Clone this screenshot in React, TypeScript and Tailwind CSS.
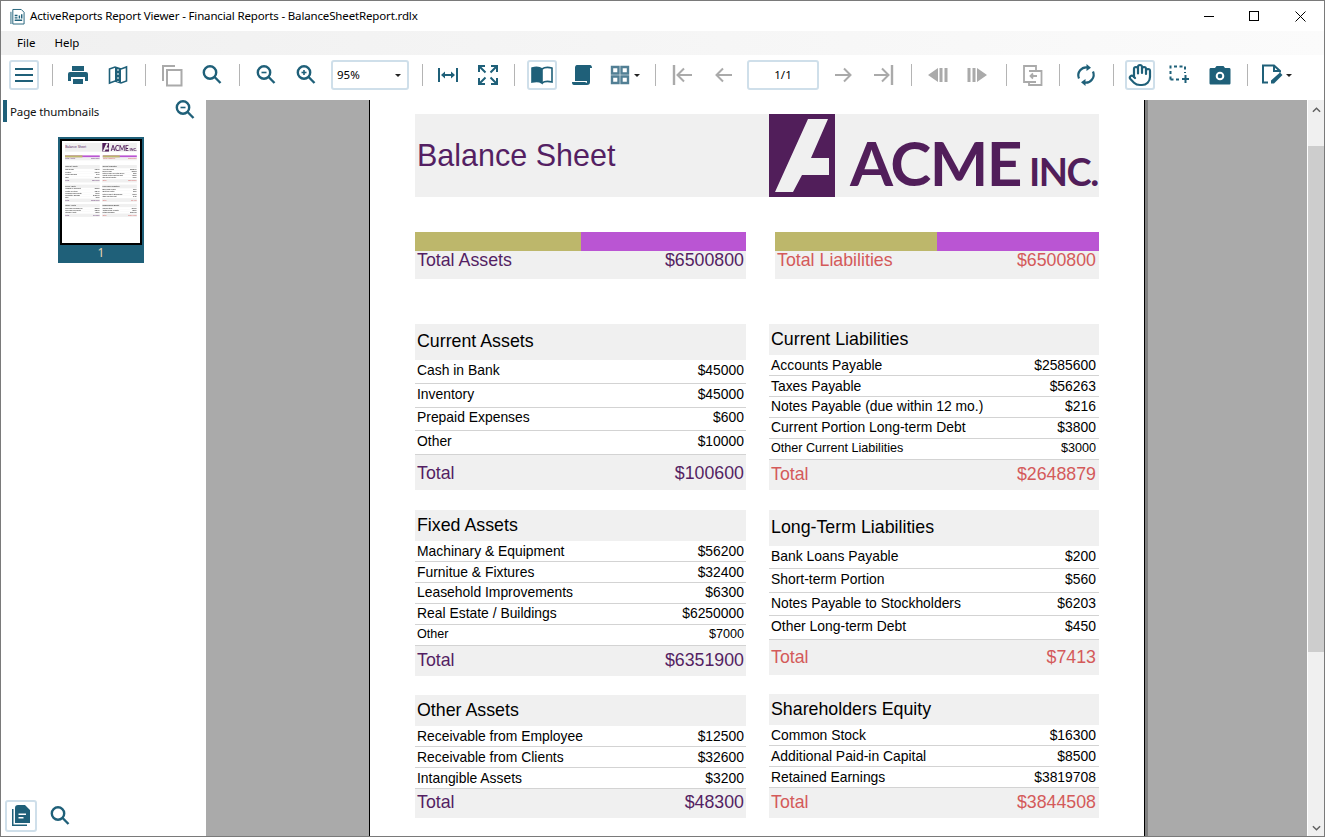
import type { ReactNode } from "react";
import { Hand } from "lucide-react";

const ui = "font-['Noto_Sans','Open_Sans',sans-serif]";

type Row = [string, string, boolean?];

function Section({ title, head, rowH, total, rows, tone, mb, pr }: { title: string; head: string; rowH: string; total: [string, string]; rows: Row[]; tone: string; mb: string; pr: string }) {
  return (
    <div className={mb}>
      <div className={`${head} bg-[#f0f0f0] px-[2px] flex items-center text-[17.8px] text-black`}>{title}</div>
      {rows.map(([label, value, small]) => (
        <div key={label} className={`${rowH} border-b border-[#d3d3d3] pl-[2px] ${pr} flex items-center justify-between text-black ${small ? "text-[12.6px]" : "text-[13.9px]"}`}>
          <span>{label}</span>
          <span>{value}</span>
        </div>
      ))}
      <div className={`${total[0]} bg-[#f0f0f0] pl-[2px] ${pr} flex items-center justify-between text-[17.8px] ${tone}`}>
        <span>Total</span>
        <span>{total[1]}</span>
      </div>
    </div>
  );
}

function Summary({ label, value, tone, width, olive, pr }: { label: string; value: string; tone: string; width: string; olive: string; pr: string }) {
  return (
    <div className={width}>
      <div className="flex h-[19px] bg-[#ba55d3]">
        <div className={`${olive} bg-[#bdb76b]`} />
      </div>
      <div className={`h-[28px] bg-[#f0f0f0] pl-[2px] ${pr} flex justify-between text-[17.8px] leading-[18px] ${tone}`}>
        <span>{label}</span>
        <span>{value}</span>
      </div>
    </div>
  );
}

function Report() {
  const purple = "text-[#541f63]";
  const red = "text-[#d45a5a]";
  return (
    <div className="w-[684px] font-['Liberation_Sans',Arial,sans-serif]">
      <div className="h-[83px] bg-[#f0f0f0] flex items-center">
        <div className={`w-[354px] shrink-0 pl-[2px] text-[30.5px] ${purple}`}>Balance Sheet</div>
        <svg viewBox="0 0 66 83" className="w-[66px] h-[83px] shrink-0">
          <path fill="#511e5a" fillRule="evenodd" d="M0 0H66V83H0ZM39 5 6 78H24L33 61H60V44H42L59 5Z" />
        </svg>
        <div className="ml-[15px] self-end pb-[7px] flex items-baseline font-['Lato',sans-serif] font-bold text-[#511e5a] whitespace-nowrap">
          <span className="text-[62px] leading-[48px] tracking-[-1.5px]">ACME</span>
          <span className="ml-[8px] text-[38px] leading-[38px] tracking-[-1.5px]">INC.</span>
        </div>
      </div>
      <div className="mt-[35px] flex justify-between">
        <Summary label="Total Assets" value="$6500800" tone={purple} width="w-[331px]" olive="w-[166px]" pr="pr-[2px]" />
        <Summary label="Total Liabilities" value="$6500800" tone={red} width="w-[324px]" olive="w-[162px]" pr="pr-[3px]" />
      </div>
      <div className="mt-[45px] flex justify-between">
        <div className="w-[331px]">
          <Section title="Current Assets" head="h-[36px] pb-[1px]" rowH="h-[23.75px] pb-[2px]" tone={purple} mb="mb-[20px]" pr="pr-[2px]" total={["h-[35px] pt-[1px]", "$100600"]}
            rows={[["Cash in Bank", "$45000"], ["Inventory", "$45000"], ["Prepaid Expenses", "$600"], ["Other", "$10000"]]} />
          <Section title="Fixed Assets" head="h-[31px]" rowH="h-[20.96px]" tone={purple} mb="mb-[19px]" pr="pr-[2px]" total={["h-[30.2px] pb-[0.5px]", "$6351900"]}
            rows={[["Machinary & Equipment", "$56200"], ["Furnitue & Fixtures", "$32400"], ["Leasehold Improvements", "$6300"], ["Real Estate / Buildings", "$6250000"], ["Other", "$7000", true]]} />
          <Section title="Other Assets" head="h-[31px]" rowH="h-[21px]" tone={purple} mb="mb-[19px]" pr="pr-[2px]" total={["h-[29px] pb-[2px]", "$48300"]}
            rows={[["Receivable from Employee", "$12500"], ["Receivable from Clients", "$32600"], ["Intangible Assets", "$3200"]]} />
        </div>
        <div className="w-[330px]">
          <Section title="Current Liabilities" head="h-[31px]" rowH="h-[20.96px]" tone={red} mb="mb-[20px]" pr="pr-[3px]" total={["h-[30.2px] pb-[0.5px]", "$2648879"]}
            rows={[["Accounts Payable", "$2585600"], ["Taxes Payable", "$56263"], ["Notes Payable (due within 12 mo.)", "$216"], ["Current Portion Long-term Debt", "$3800"], ["Other Current Liabilities", "$3000", true]]} />
          <Section title="Long-Term Liabilities" head="h-[36px] pb-[1px]" rowH="h-[23.5px] pb-[2px]" tone={red} mb="mb-[19px]" pr="pr-[3px]" total={["h-[35px]", "$7413"]}
            rows={[["Bank Loans Payable", "$200"], ["Short-term Portion", "$560"], ["Notes Payable to Stockholders", "$6203"], ["Other Long-term Debt", "$450"]]} />
          <Section title="Shareholders Equity" head="h-[31px]" rowH="h-[21px]" tone={red} mb="mb-[19px]" pr="pr-[3px]" total={["h-[30px] pb-[1px]", "$3844508"]}
            rows={[["Common Stock", "$16300"], ["Additional Paid-in Capital", "$8500"], ["Retained Earnings", "$3819708"]]} />
        </div>
      </div>
    </div>
  );
}

const teal = "#1f6079";
const off = "#aaaaaa";

function Ico({ children, color = teal, fill = "none", sw = 2 }: { children: ReactNode; color?: string; fill?: string; sw?: number }) {
  return (
    <svg viewBox="0 0 24 24" width="24" height="24" fill={fill} stroke={color} strokeWidth={sw}>
      {children}
    </svg>
  );
}

function Tool({ children, ml, active }: { children: ReactNode; ml: string; active?: boolean }) {
  return (
    <div className={`${ml} w-[30px] h-[30px] shrink-0 flex items-center justify-center rounded-[3px] ${active ? "border-2 border-[#cfdfea]" : ""}`}>
      {children}
    </div>
  );
}

function Sep({ ml }: { ml: string }) {
  return <div className={`${ml} w-px h-[22px] shrink-0 bg-[#b4b4b4]`} />;
}

function Caret() {
  return <div className="w-0 h-0 border-x-[3px] border-x-transparent border-t-[3px] border-t-[#222]" />;
}

const SearchIco = ({ sign }: { sign?: "plus" | "minus" }) => (
  <Ico sw={2.4}>
    <circle cx="10" cy="9.5" r="6.2" />
    <path d="M14.6 14 20.5 20" />
    {sign && <path strokeWidth={1.6} d="M7.5 9.5H12.5" />}
    {sign === "plus" && <path strokeWidth={1.6} d="M10 7V12" />}
  </Ico>
);

function Toolbar() {
  return (
    <div className="h-[45px] flex items-center pl-[8px] pb-[5px] bg-white shrink-0">
      <Tool ml="ml-0" active>
        <Ico sw={2.2}><path d="M3 6H21M3 12H21M3 18H21" /></Ico>
      </Tool>
      <Sep ml="ml-[13px]" />
      <Tool ml="ml-[10px]">
        <Ico color="none" fill={teal}>
          <path d="M6 3H18V8H6ZM4 9H20A2 2 0 0 1 22 11V18H19V14H5V18H2V11A2 2 0 0 1 4 9ZM7 16H17V21H7Z" />
        </Ico>
      </Tool>
      <Tool ml="ml-[10px]">
        <Ico sw={1.6}>
          <path d="M3.5 6 9 4 15 6 20.5 4V18L15 20 9 18 3.5 20Z" />
          <path fill={teal} stroke="none" d="M9 4 15 6V20L9 18Z" />
          <path stroke="#fff" strokeWidth={1} strokeDasharray="2 2" d="M12 6V19" />
        </Ico>
      </Tool>
      <Sep ml="ml-[12px]" />
      <Tool ml="ml-[11px]">
        <Ico color={off} sw={2}>
          <path d="M7 7H21.5V22.5H7Z" />
          <path d="M3 18V3H15" />
        </Ico>
      </Tool>
      <Tool ml="ml-[10px]"><SearchIco /></Tool>
      <Sep ml="ml-[12px]" />
      <Tool ml="ml-[11px]"><SearchIco sign="minus" /></Tool>
      <Tool ml="ml-[10px]"><SearchIco sign="plus" /></Tool>
      <div className="ml-[10px] w-[78px] h-[30px] shrink-0 border-2 border-[#cfdfea] rounded-[3px] flex items-center justify-between pl-[4px] pr-[6px] text-[11.5px] text-black">
        <span>95%</span>
        <Caret />
      </div>
      <Sep ml="ml-[13px]" />
      <Tool ml="ml-[10px]">
        <Ico><path d="M3 5V19M21 5V19M6.5 12H17.5" /><path fill={teal} stroke="none" d="M5 12 9 8.5V15.5ZM19 12 15 8.5V15.5Z" /></Ico>
      </Tool>
      <Tool ml="ml-[10px]">
        <Ico sw={2}>
          <path d="M3 9V3H9M21 9V3H15M3 15V21H9M21 15V21H15" />
          <path d="M4 4 9.5 9.5M20 4 14.5 9.5M4 20 9.5 14.5M20 20 14.5 14.5" />
        </Ico>
      </Tool>
      <Sep ml="ml-[11px]" />
      <Tool ml="ml-[12px]" active>
        <Ico sw={1.6}>
          <path fill={teal} d="M12 6C10 4.5 6 4 2 5V19C6 18 10 18.5 12 20Z" />
          <path d="M12 6C14 4.5 18 4 22 5V19C18 18 14 18.5 12 20" />
        </Ico>
      </Tool>
      <Tool ml="ml-[10px]">
        <Ico color="none" fill={teal}>
          <path d="M7 2H20C21.5 2 22 3.5 22 5L20 5V19C20 21 19 22 17 22H4C2.5 22 2 21 2 19H15C15.5 19 16 19.5 16 20C17 20 17 19 17 18H5V5C5 3.5 5.5 2 7 2Z" />
        </Ico>
      </Tool>
      <Tool ml="ml-[8px]">
        <Ico color="#527f94" sw={2.4}>
          <path d="M4 4H10.5V10.5H4ZM13.5 4H20V10.5H13.5ZM4 13.5H10.5V20H4ZM13.5 13.5H20V20H13.5Z" />
        </Ico>
      </Tool>
      <div className="ml-[-1px] mr-[-5px]"><Caret /></div>
      <Sep ml="ml-[20px]" />
      <Tool ml="ml-[11px]">
        <Ico color={off}><path strokeWidth={2.4} d="M4 2V22" /><path d="M22 12H8M14 5.5 7.5 12 14 18.5" /></Ico>
      </Tool>
      <Tool ml="ml-[11px]">
        <Ico color={off}><path d="M21 12H5M12 5.5 5.5 12 12 18.5" /></Ico>
      </Tool>
      <div className="ml-[9px] w-[72px] h-[30px] shrink-0 border-2 border-[#cfdfea] rounded-[3px] flex items-center justify-center text-[11.5px] text-black">1/1</div>
      <Tool ml="ml-[10px]">
        <Ico color={off}><path d="M3 12H19M12 5.5 18.5 12 12 18.5" /></Ico>
      </Tool>
      <Tool ml="ml-[10px]">
        <Ico color={off}><path strokeWidth={2.4} d="M20 2V22" /><path d="M2 12H16M10 5.5 16.5 12 10 18.5" /></Ico>
      </Tool>
      <Sep ml="ml-[12px]" />
      <Tool ml="ml-[11px]">
        <Ico color="none" fill={off}><path d="M2 12 12 5V19ZM13.5 5H16.5V19H13.5ZM18.5 5H21.5V19H18.5Z" /></Ico>
      </Tool>
      <Tool ml="ml-[9px]">
        <Ico color="none" fill={off}><path d="M22 12 12 5V19ZM10.5 5H7.5V19H10.5ZM5.5 5H2.5V19H5.5Z" /></Ico>
      </Tool>
      <Sep ml="ml-[14px]" />
      <Tool ml="ml-[11px]">
        <Ico color={off} sw={1.8}>
          <path d="M15 19H3V3H15V8" />
          <path d="M8 8H20.5V22H8V19" />
          <path d="M16 13H9.5M12 10.5 9.5 13 12 15.5" />
        </Ico>
      </Tool>
      <Sep ml="ml-[11px]" />
      <Tool ml="ml-[11px]">
        <Ico sw={2.2}>
          <path d="M5 15.5A8 8 0 0 1 14 4.5" />
          <path d="M19 8.5A8 8 0 0 1 10 19.5" />
          <path fill={teal} stroke="none" d="M12.5 1 17 4.8 12.5 8ZM11.5 16 7 19.2 11.5 23Z" />
        </Ico>
      </Tool>
      <Sep ml="ml-[12px]" />
      <Tool ml="ml-[11px]" active><Hand size={24} color={teal} strokeWidth={2.2} /></Tool>
      <Tool ml="ml-[9px]">
        <Ico sw={2}>
          <path strokeDasharray="3 2.5" d="M3.5 16.5V3.5H18V10" />
          <path strokeDasharray="3 2.5" d="M3.5 16.5H13" />
          <path d="M18.5 12V20M15 16H22" />
        </Ico>
      </Tool>
      <Tool ml="ml-[11px]">
        <svg viewBox="0 0 24 24" width="24" height="24">
          <path fill={teal} d="M3 5H7L8.5 3H15.5L17 5H21C22 5 22.5 5.5 22.5 6.5V20C22.5 21 22 21.5 21 21.5H3C2 21.5 1.5 21 1.5 20V6.5C1.5 5.5 2 5 3 5Z" />
          <circle cx="12" cy="13" r="3.3" fill="none" stroke="#fff" strokeWidth={2} />
        </svg>
      </Tool>
      <Sep ml="ml-[12px]" />
      <Tool ml="ml-[9px]">
        <Ico sw={2}>
          <path d="M8 19.5H3V2.5H14L20 8V9.5" />
          <path d="M14 2.5V8H20" />
          <path fill={teal} stroke="none" d="M20 9.5 22.5 12 14 20.5H11V17.5Z" />
        </Ico>
      </Tool>
      <div className="ml-[-1px]"><Caret /></div>
    </div>
  );
}

function Sidebar() {
  return (
    <div className="w-[205px] shrink-0 flex flex-col justify-between bg-white">
      <div>
        <div className="h-[22px] flex items-center justify-between pl-[2px] pr-[9px]">
          <div className="flex items-center h-full">
            <div className="w-[4px] h-full bg-[#1f6079]" />
            <span className="ml-[3px] mt-[2px] text-[11.5px] tracking-[-0.13px] text-[#111]">Page thumbnails</span>
          </div>
          <div className="mb-[2px]"><SearchIco sign="minus" /></div>
        </div>
        <div className="ml-[57px] mt-[15px] w-[86px] h-[126px] bg-[#1f6079]">
          <div className="mx-[2px] mt-[2px] pt-[2px] w-[82px] h-[106px] relative top-[2px] border-2 border-black bg-white overflow-hidden pl-[3px]">
            <div className="origin-top-left scale-[0.105] w-[684px] h-[900px]"><Report /></div>
          </div>
          <div className="mt-[3px] text-center text-[12px] leading-[14px] text-[#e8d8b8]">1</div>
        </div>
      </div>
      <div className="h-[36px] flex items-start pl-[4px]">
        <div className="w-[32px] h-[32px] border-2 border-[#cfdfea] rounded-[3px] flex items-center justify-center">
          <Ico color="none" fill={teal}>
            <path d="M9 1H16L21 6V19H6V4C6 2 7 1 9 1ZM9.5 9.5V11H17V9.5ZM9.5 13V14.5H14.5V13Z" fillRule="evenodd" />
            <path d="M3 5H4.5V20.5H18V22H3Z" />
          </Ico>
        </div>
        <div className="ml-[11px] mt-[4px]"><SearchIco /></div>
      </div>
    </div>
  );
}

export default function App() {
  return (
    <div className={`w-[1325px] h-[837px] overflow-hidden flex flex-col border border-[#7a7a7a] bg-white ${ui}`}>
      <div className="h-[30px] shrink-0 flex items-center bg-white">
        <svg viewBox="0 0 16 18" className="ml-[9px] w-[15px] h-[17px] mt-[1px]" fill="none" stroke={teal} strokeWidth={1}>
          <path d="M3 1.5H12L15 4.5V17H3ZM1 4V17" />
          <path strokeWidth={1.5} d="M5 8H8M5 10.5H8M5 13H13M10 11V8M12.5 11V6.5" />
        </svg>
        <span className="ml-[5px] text-[11.5px] text-black tracking-[-0.15px] whitespace-nowrap">ActiveReports Report Viewer - Financial Reports - BalanceSheetReport.rdlx</span>
        <div className="ml-auto flex items-center h-full text-black">
          <div className="w-[44px] flex justify-center"><div className="w-[10px] h-px bg-black" /></div>
          <div className="w-[46px] flex justify-center"><div className="w-[10px] h-[10px] border border-black" /></div>
          <div className="w-[46px] mr-[1px] flex justify-center">
            <svg viewBox="0 0 11 11" width="11" height="11" stroke="black" strokeWidth={1}><path d="M.5.5 10.5 10.5M10.5.5 .5 10.5" /></svg>
          </div>
        </div>
      </div>
      <div className="h-[24px] shrink-0 flex items-center bg-gradient-to-r from-[#f0f0f0] to-[#fbfbfb] text-[11.5px] text-black">
        <span className="ml-[16px]">File</span>
        <span className="ml-[19px]">Help</span>
      </div>
      <Toolbar />
      <div className="flex flex-1 min-h-0">
        <Sidebar />
        <div className="flex-1 min-w-0 bg-[#aaaaaa] overflow-hidden pl-[163px] flex">
          <div className="w-[776px] shrink-0 bg-white border-x border-black pl-[45px] pt-[14px] h-full"><Report /></div>
          <div className="w-[3px] bg-[#808080]" />
        </div>
        <div className="w-[17px] shrink-0 bg-[#f0f0f0] border-l border-white flex flex-col items-center">
          <svg viewBox="0 0 10 6" className="mt-[7px] w-[9px] h-[6px]" fill="none" stroke="#606060" strokeWidth={1.6}><path d="M1 5 5 1 9 5" /></svg>
          <div className="mt-[33px] w-full h-[506px] bg-[#cdcdcd]" />
          <svg viewBox="0 0 10 6" className="mt-auto mb-[5px] w-[9px] h-[6px]" fill="none" stroke="#606060" strokeWidth={1.6}><path d="M1 1 5 5 9 1" /></svg>
        </div>
      </div>
    </div>
  );
}
